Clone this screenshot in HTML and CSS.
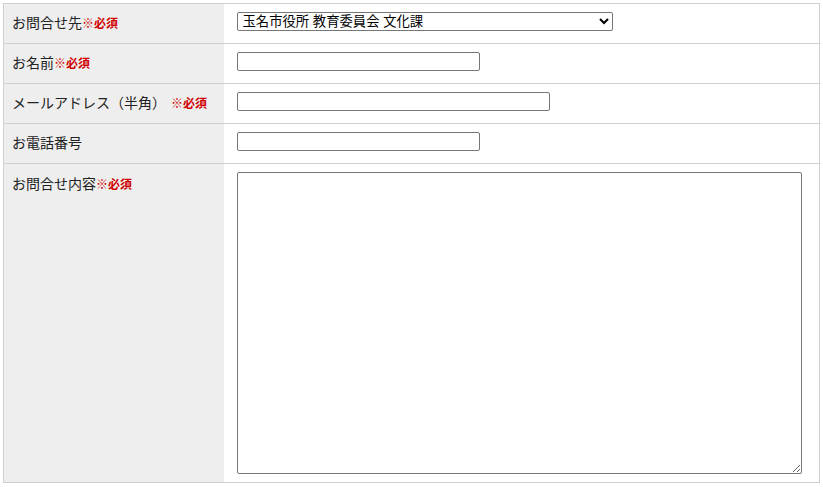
FILE: index.html
```html
<!DOCTYPE html>
<html lang="ja">
<head>
<meta charset="utf-8">
<title>お問合せフォーム</title>
<link rel="stylesheet" href="styles.css">
</head>
<body>
<form class="contact">
  <table class="form-table">
    <tr class="row">
      <th class="label">お問合せ先<span class="req">※必須</span></th>
      <td class="field">
        <select class="select">
          <option>玉名市役所 教育委員会 文化課</option>
        </select>
      </td>
    </tr>
    <tr class="row">
      <th class="label">お名前<span class="req">※必須</span></th>
      <td class="field"><input class="text short" type="text"></td>
    </tr>
    <tr class="row">
      <th class="label">メールアドレス（半角）<span class="req req-gap">※必須</span></th>
      <td class="field"><input class="text long" type="text"></td>
    </tr>
    <tr class="row">
      <th class="label">お電話番号</th>
      <td class="field"><input class="text short" type="text"></td>
    </tr>
    <tr class="row row-tall">
      <th class="label label-top">お問合せ内容<span class="req">※必須</span></th>
      <td class="field"><textarea class="textarea"></textarea></td>
    </tr>
  </table>
</form>
</body>
</html>
```

FILE: styles.css
```css
html, body {
  margin: 0;
  padding: 0;
  background: #fff;
}

body {
  padding: 3px 0 0 3px;
  font-family: "Noto Sans CJK JP", "Noto Sans", sans-serif;
  font-size: 14px;
  color: #222;
}

.form-table {
  width: 817px;
  border-collapse: collapse;
  border: 1px solid #cfcfcf;
}

.row {
  height: 40px;
  border-bottom: 1px solid #cfcfcf;
}

.row-tall {
  height: 318px;
}

.label {
  width: 220px;
  box-sizing: border-box;
  padding: 6px 8px 0;
  background: #eeeeee;
  font-weight: normal;
  text-align: left;
  vertical-align: top;
  line-height: 24px;
  white-space: nowrap;
}

.label-top {
  padding-top: 7px;
}

.req {
  color: #d00000;
  font-weight: bold;
  font-size: 12px;
}

.req-gap {
  margin-left: 5px;
}

/* every control sits 8px below the top of its row */
.field {
  padding: 8px 13px;
  vertical-align: top;
}

.select {
  display: block;
  width: 376px;
  height: 19px;
  box-sizing: border-box;
  margin: 0;
  padding: 0 0 0 1px;
  font-family: "Liberation Sans", "Noto Sans CJK JP", sans-serif;
  font-size: 13.33px;
  color: #000;
  border: 1px solid #767676;
  border-radius: 2px;
  background: #fff;
}

.text {
  display: block;
  height: 19px;
  box-sizing: border-box;
  margin: 0;
  padding: 0 2px;
  border: 1px solid #767676;
  border-radius: 2px;
  font-size: 13px;
}

.short {
  width: 243px;
}

.long {
  width: 313px;
}

.textarea {
  display: block;
  width: 565px;
  height: 302px;
  box-sizing: border-box;
  margin: 0;
  border: 1px solid #767676;
  border-radius: 2px;
  font-size: 13px;
}
```
